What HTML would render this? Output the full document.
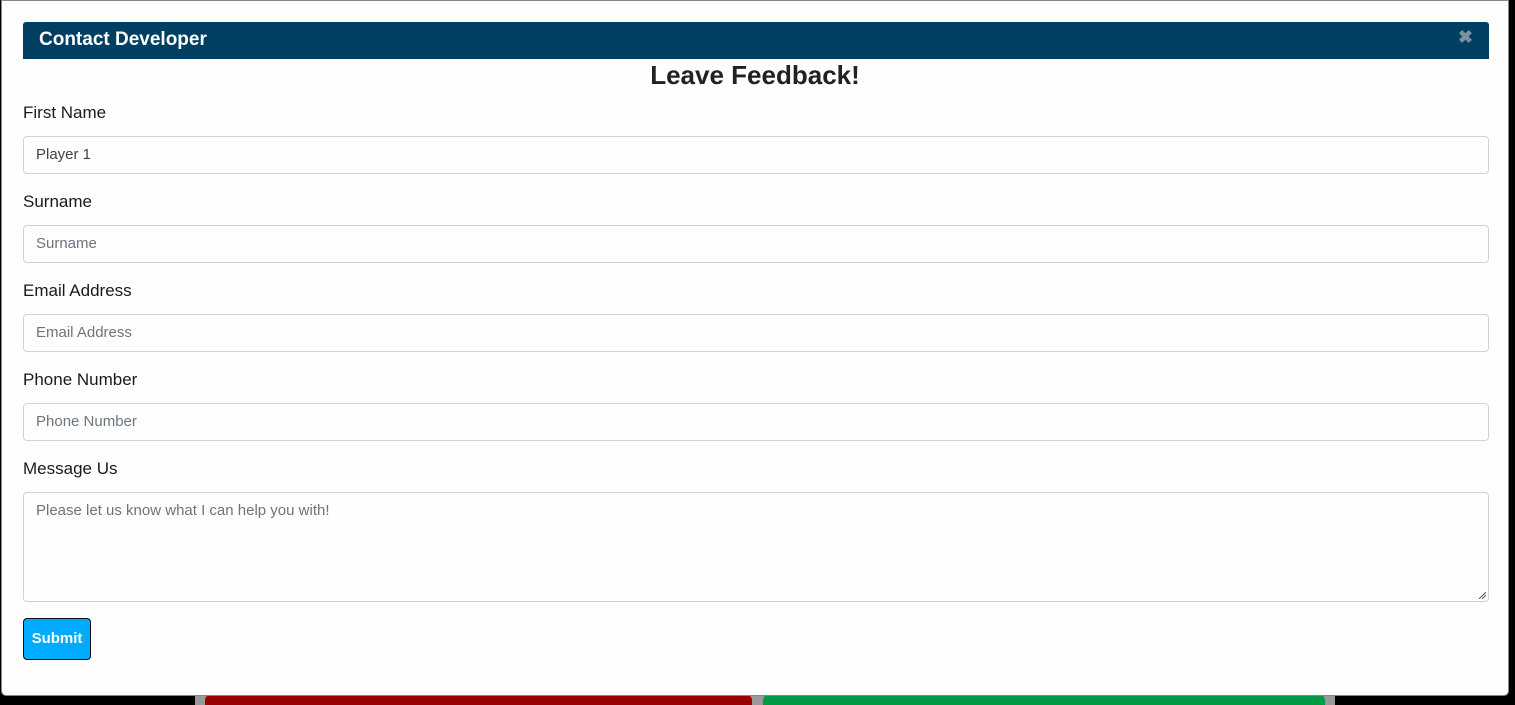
<!DOCTYPE html>
<html><head><style>
html,body{margin:0;padding:0;width:1515px;height:701px;background:#000;overflow:hidden;font-family:"Liberation Sans",sans-serif;}
.bar{position:absolute;top:695px;height:10px;}
.modal{position:absolute;left:1px;top:0;width:1506px;height:694px;background:#fefefe;border:1px solid #888;border-radius:0 0 5px 5px;}
.hdr{position:absolute;left:21px;top:21px;width:1466px;height:37px;background:#003e62;border-radius:3px 3px 0 0;}
.hdr span{position:absolute;left:16px;top:7px;color:#fff;font-size:19px;font-weight:bold;}
.hdr i{position:absolute;right:16px;top:5px;color:#7d90a0;font-style:normal;font-size:18px;font-weight:bold;}
h1{position:absolute;left:0;width:1506px;top:59px;margin:0;text-align:center;font-size:26px;font-weight:bold;color:#222;}
label{position:absolute;left:21px;font-size:17px;color:#1a1a1a;}
.in{position:absolute;left:21px;width:1464px;height:36px;border:1px solid #ced4da;border-radius:4px;box-sizing:content-box;}
.in span{position:absolute;left:12px;top:9px;font-size:15px;color:#6c757d;}
.btn{position:absolute;left:21px;top:617px;width:66px;height:40px;background:#00aaff;border:1px solid #111;border-radius:4px;color:#fff;font-weight:bold;font-size:15px;text-align:center;line-height:40px;}
</style></head><body>
<div class="bar" style="left:195px;width:1140px;background:#999"></div>
<div class="bar" style="left:205px;width:547px;background:#990000;border-radius:5px 5px 0 0"></div>
<div class="bar" style="left:763px;width:562px;background:#009944;border-radius:5px 5px 0 0"></div>
<div class="modal">
<div class="hdr"><span>Contact Developer</span><i>✖</i></div>
<h1>Leave Feedback!</h1>
<label style="top:102px">First Name</label>
<div class="in" style="top:135px"><span style="color:#444">Player 1</span></div>
<label style="top:191px">Surname</label>
<div class="in" style="top:224px"><span>Surname</span></div>
<label style="top:280px">Email Address</label>
<div class="in" style="top:313px"><span>Email Address</span></div>
<label style="top:369px">Phone Number</label>
<div class="in" style="top:402px"><span>Phone Number</span></div>
<label style="top:458px">Message Us</label>
<div class="in" style="top:491px;height:108px"><span>Please let us know what I can help you with!</span>
<svg style="position:absolute;right:2px;bottom:2px" width="8" height="8"><path d="M1 8L8 1M4 8L8 4" stroke="#555" stroke-width="1"/></svg></div>
<div class="btn">Submit</div>
</div>
</body></html>
